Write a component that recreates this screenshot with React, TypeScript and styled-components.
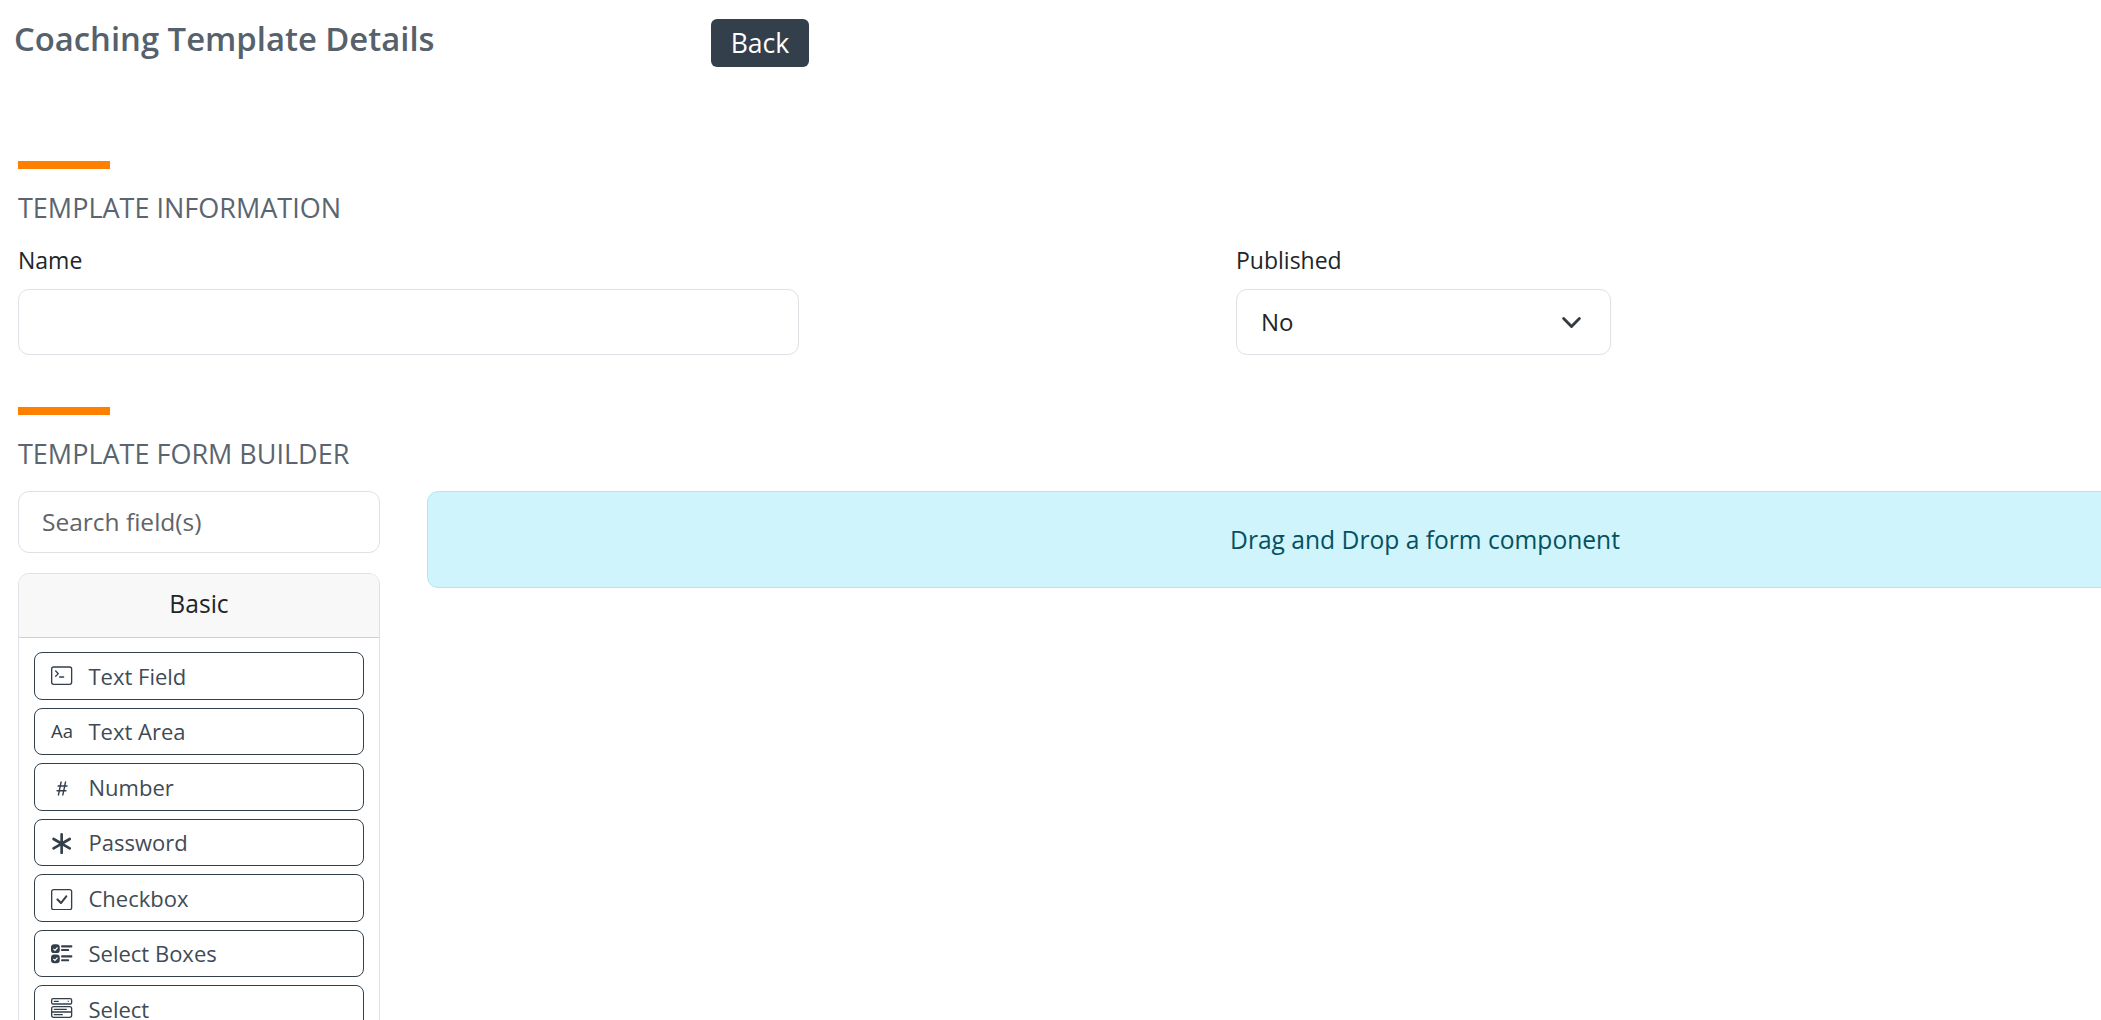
import React from 'react';
import styled, { createGlobalStyle } from 'styled-components';
import { BsTerminal, BsHash, BsAsterisk, BsCheckSquare, BsMenuButtonWide } from 'react-icons/bs';

const GlobalStyle = createGlobalStyle`
  html, body {
    margin: 0;
    height: 100%;
    overflow: hidden;
    background: #fff;
  }
  body {
    font-family: "Open Sans", "Noto Sans", sans-serif;
    font-size: 23px;
    color: #212529;
  }
`;

const Page = styled.div`
  width: 2440px;
`;

const Header = styled.header`
  display: grid;
  grid-template-columns: 697px auto;
  justify-content: start;
  align-items: start;
  height: 161px;
  padding: 18px 0 0 14px;
  box-sizing: border-box;
`;

const PageTitle = styled.h1`
  margin: 0;
  font-size: 32.8px;
  line-height: 42px;
  font-weight: 600;
  color: #56616c;
`;

const BackButton = styled.button`
  width: 98px;
  height: 48px;
  margin-top: 1px;
  padding: 0;
  border: 0;
  border-radius: 6px;
  background: #333f4a;
  color: #fff;
  font-family: inherit;
  font-size: 26.6px;
  line-height: 48px;
`;

const Section = styled.section`
  margin-left: 18px;
`;

const SectionBar = styled.div`
  width: 92px;
  height: 8px;
  background: #ff8000;
`;

const SectionTitle = styled.h2`
  margin: 21px 0 0;
  font-size: 27px;
  line-height: 36px;
  font-weight: 400;
  color: #5a6570;
`;

const InfoRow = styled.div`
  display: grid;
  grid-template-columns: 781px 375px;
  column-gap: 437px;
  margin: 18px 0 52px;
`;

const Field = styled.div`
  display: flex;
  flex-direction: column;
`;

const Label = styled.label`
  font-size: 23px;
  line-height: 32px;
  margin-bottom: 13px;
  color: #212529;
`;

const boxStyle = `
  box-sizing: border-box;
  width: 100%;
  background: #fff;
  border: 1.33px solid #dee2e6;
  border-radius: 11px;
  font-family: inherit;
`;

const TextInput = styled.input`
  ${boxStyle}
  display: block;
  height: 66px;
  padding: 0 24px;
  font-size: 24px;
  color: #212529;
`;

const SelectBox = styled.div`
  ${boxStyle}
  display: flex;
  align-items: center;
  justify-content: space-between;
  height: 66px;
  padding: 0 28px 2px 24px;
  font-size: 24px;
  color: #212529;
`;

const Chevron = styled.svg`
  width: 21px;
  height: 21px;
  margin-top: 2px;
  fill: none;
  stroke: #343a40;
  stroke-width: 2.2;
  stroke-linecap: round;
  stroke-linejoin: round;
`;

const BuilderRow = styled.div`
  display: grid;
  grid-template-columns: 362px 1996px;
  column-gap: 47px;
  margin-top: 19px;
  align-items: start;
`;

const Sidebar = styled.aside`
  display: flex;
  flex-direction: column;
  gap: 20px;
`;

const SearchInput = styled.input`
  ${boxStyle}
  display: block;
  height: 62px;
  padding: 0 0 2px 23px;
  font-size: 24.5px;
  color: #212529;

  &::placeholder {
    color: #5f6468;
    opacity: 1;
  }
`;

const Card = styled.div`
  box-sizing: border-box;
  border: 1.33px solid #dee2e6;
  border-radius: 11px 11px 0 0;
  overflow: hidden;
`;

const CardHeader = styled.div`
  height: 63px;
  line-height: 59px;
  text-align: center;
  background: #f8f8f8;
  border-bottom: 1.33px solid #cfd1d3;
  font-size: 24.6px;
  color: #212529;
`;

const CardBody = styled.div`
  display: flex;
  flex-direction: column;
  gap: 8px;
  padding: 14px 15px 15px;
`;

const ComponentButton = styled.div`
  box-sizing: border-box;
  display: flex;
  align-items: center;
  height: 47.5px;
  padding-left: 15px;
  border: 1px solid #333f4a;
  border-radius: 8px;
  background: #fff;
  color: #3f4b56;
  font-size: 22px;
`;

const IconSlot = styled.span<{ $drop?: boolean }>`
  display: flex;
  align-items: center;
  justify-content: center;
  flex: 0 0 24px;
  width: 24px;
  margin-right: 14.5px;
  padding-top: ${(p) => (p.$drop ? '3px' : '0')};
  color: #333f4a;
  font-size: 21.3px;
`;

const AaGlyph = styled.span`
  font-size: 18.5px;
  line-height: 1;
`;

const ChecksIcon = styled.svg`
  width: 21.3px;
  height: 21.3px;
  fill: currentColor;
`;

const DropAlert = styled.div`
  box-sizing: border-box;
  height: 97px;
  line-height: 95px;
  text-align: center;
  background: #cff4fc;
  border: 1.33px solid #a8ebf7;
  border-radius: 11px;
  color: #055160;
  font-size: 24.6px;
`;

// filled badges with a white tick, plus the two lines next to each
const checksIcon = (
  <ChecksIcon viewBox="0 0 16 16">
    <rect x="0" y="1" width="6.6" height="6.6" rx="2.4" />
    <rect x="0" y="8.6" width="6.6" height="6.6" rx="2.4" />
    <path d="M1.8 4.4l1.2 1.1 1.9-2.1M1.8 12l1.2 1.1 1.9-2.1" fill="none" stroke="#fff" strokeWidth=".9" />
    <rect x="7.6" y="1.6" width="8.4" height="1.7" rx=".5" />
    <rect x="7.6" y="4.6" width="6" height="1.5" rx=".5" />
    <rect x="7.6" y="9.2" width="8.4" height="1.7" rx=".5" />
    <rect x="7.6" y="12.2" width="6" height="1.5" rx=".5" />
  </ChecksIcon>
);

const components: { label: string; icon: React.ReactNode; drop?: boolean }[] = [
  { label: 'Text Field', icon: <BsTerminal /> },
  { label: 'Text Area', icon: <AaGlyph>Aa</AaGlyph> },
  { label: 'Number', icon: <BsHash />, drop: true },
  { label: 'Password', icon: <BsAsterisk />, drop: true },
  { label: 'Checkbox', icon: <BsCheckSquare />, drop: true },
  { label: 'Select Boxes', icon: checksIcon },
  { label: 'Select', icon: <BsMenuButtonWide /> },
];

export default function App() {
  return (
    <Page>
      <GlobalStyle />
      <Header>
        <PageTitle>Coaching Template Details</PageTitle>
        <BackButton type="button">Back</BackButton>
      </Header>

      <Section>
        <SectionBar />
        <SectionTitle>TEMPLATE INFORMATION</SectionTitle>
        <InfoRow>
          <Field>
            <Label>Name</Label>
            <TextInput type="text" />
          </Field>
          <Field>
            <Label>Published</Label>
            <SelectBox>
              No
              <Chevron viewBox="0 0 16 16">
                <path d="M2 5l6 6 6-6" />
              </Chevron>
            </SelectBox>
          </Field>
        </InfoRow>
      </Section>

      <Section>
        <SectionBar />
        <SectionTitle>TEMPLATE FORM BUILDER</SectionTitle>
        <BuilderRow>
          <Sidebar>
            <SearchInput type="text" placeholder="Search field(s)" />
            <Card>
              <CardHeader>Basic</CardHeader>
              <CardBody>
                {components.map((item) => (
                  <ComponentButton key={item.label}>
                    <IconSlot $drop={item.drop}>{item.icon}</IconSlot>
                    {item.label}
                  </ComponentButton>
                ))}
              </CardBody>
            </Card>
          </Sidebar>
          <DropAlert>Drag and Drop a form component</DropAlert>
        </BuilderRow>
      </Section>
    </Page>
  );
}
